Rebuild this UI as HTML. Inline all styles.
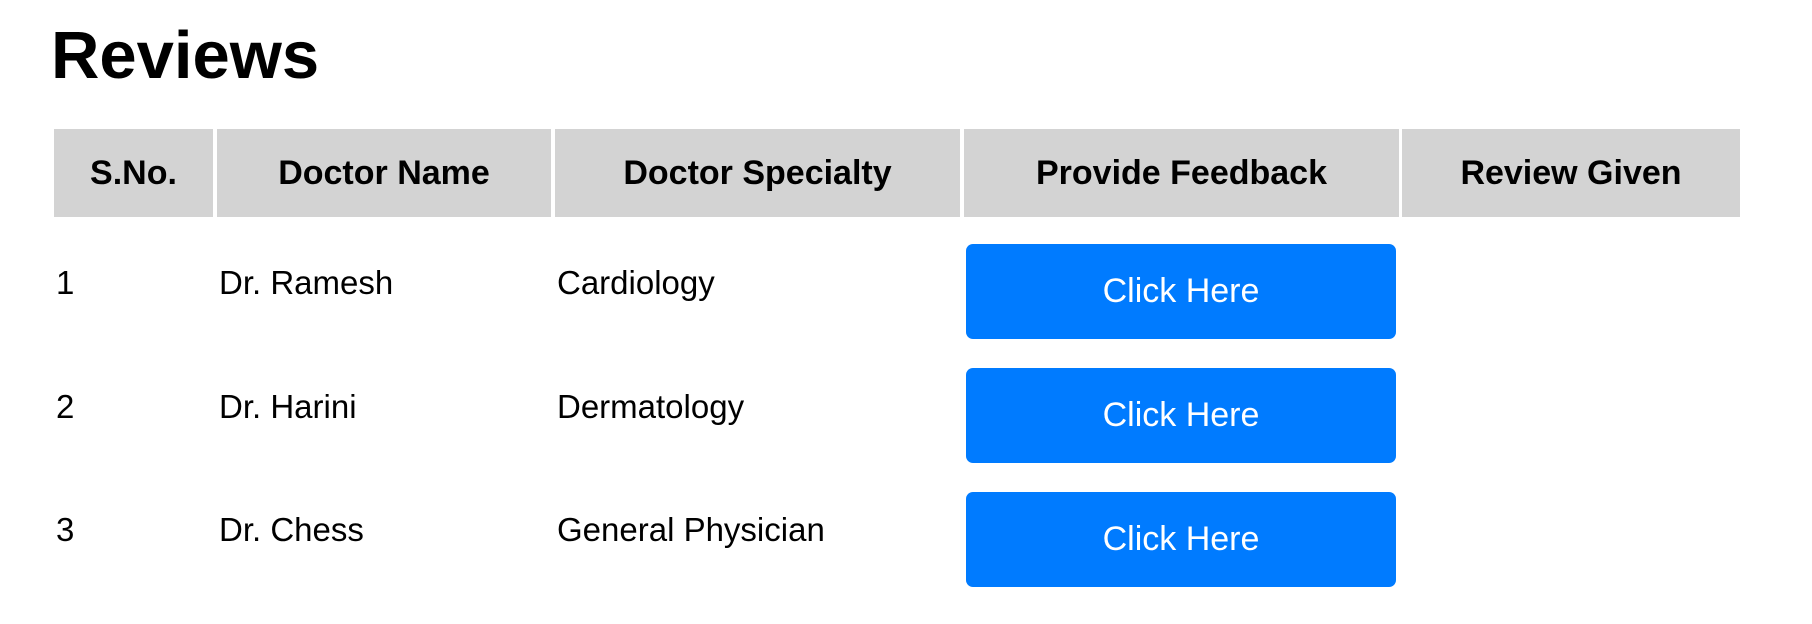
<!DOCTYPE html>
<html><head><meta charset="utf-8"><style>
html,body{margin:0;padding:0;background:#fff;width:1812px;height:624px;overflow:hidden;font-family:"Liberation Sans",sans-serif;color:#000}
.a{position:absolute;white-space:nowrap}
h1{position:absolute;left:51px;top:16px;margin:0;font-size:67px;font-weight:bold;line-height:80px}
.th{position:absolute;top:129px;height:88px;background:#d3d3d3;font-weight:bold;font-size:34px;line-height:88px;text-align:center}
.td{position:absolute;font-size:33px;line-height:33px}
.btn{position:absolute;left:966px;width:430px;height:95px;background:#007bff;border-radius:7px;color:#fff;font-size:34px;line-height:95px;text-align:center}
</style></head><body>
<h1>Reviews</h1>
<div class="th" style="left:54px;width:159px">S.No.</div>
<div class="th" style="left:217px;width:334px">Doctor Name</div>
<div class="th" style="left:555px;width:405px">Doctor Specialty</div>
<div class="th" style="left:964px;width:435px">Provide Feedback</div>
<div class="th" style="left:1402px;width:338px">Review Given</div>

<div class="td a" style="left:56px;top:266px">1</div>
<div class="td a" style="left:219px;top:266px">Dr. Ramesh</div>
<div class="td a" style="left:557px;top:266px">Cardiology</div>
<div class="btn" style="top:244px">Click Here</div>

<div class="td a" style="left:56px;top:390px">2</div>
<div class="td a" style="left:219px;top:390px">Dr. Harini</div>
<div class="td a" style="left:557px;top:390px">Dermatology</div>
<div class="btn" style="top:368px">Click Here</div>

<div class="td a" style="left:56px;top:513px">3</div>
<div class="td a" style="left:219px;top:513px">Dr. Chess</div>
<div class="td a" style="left:557px;top:513px">General Physician</div>
<div class="btn" style="top:492px">Click Here</div>
</body></html>
